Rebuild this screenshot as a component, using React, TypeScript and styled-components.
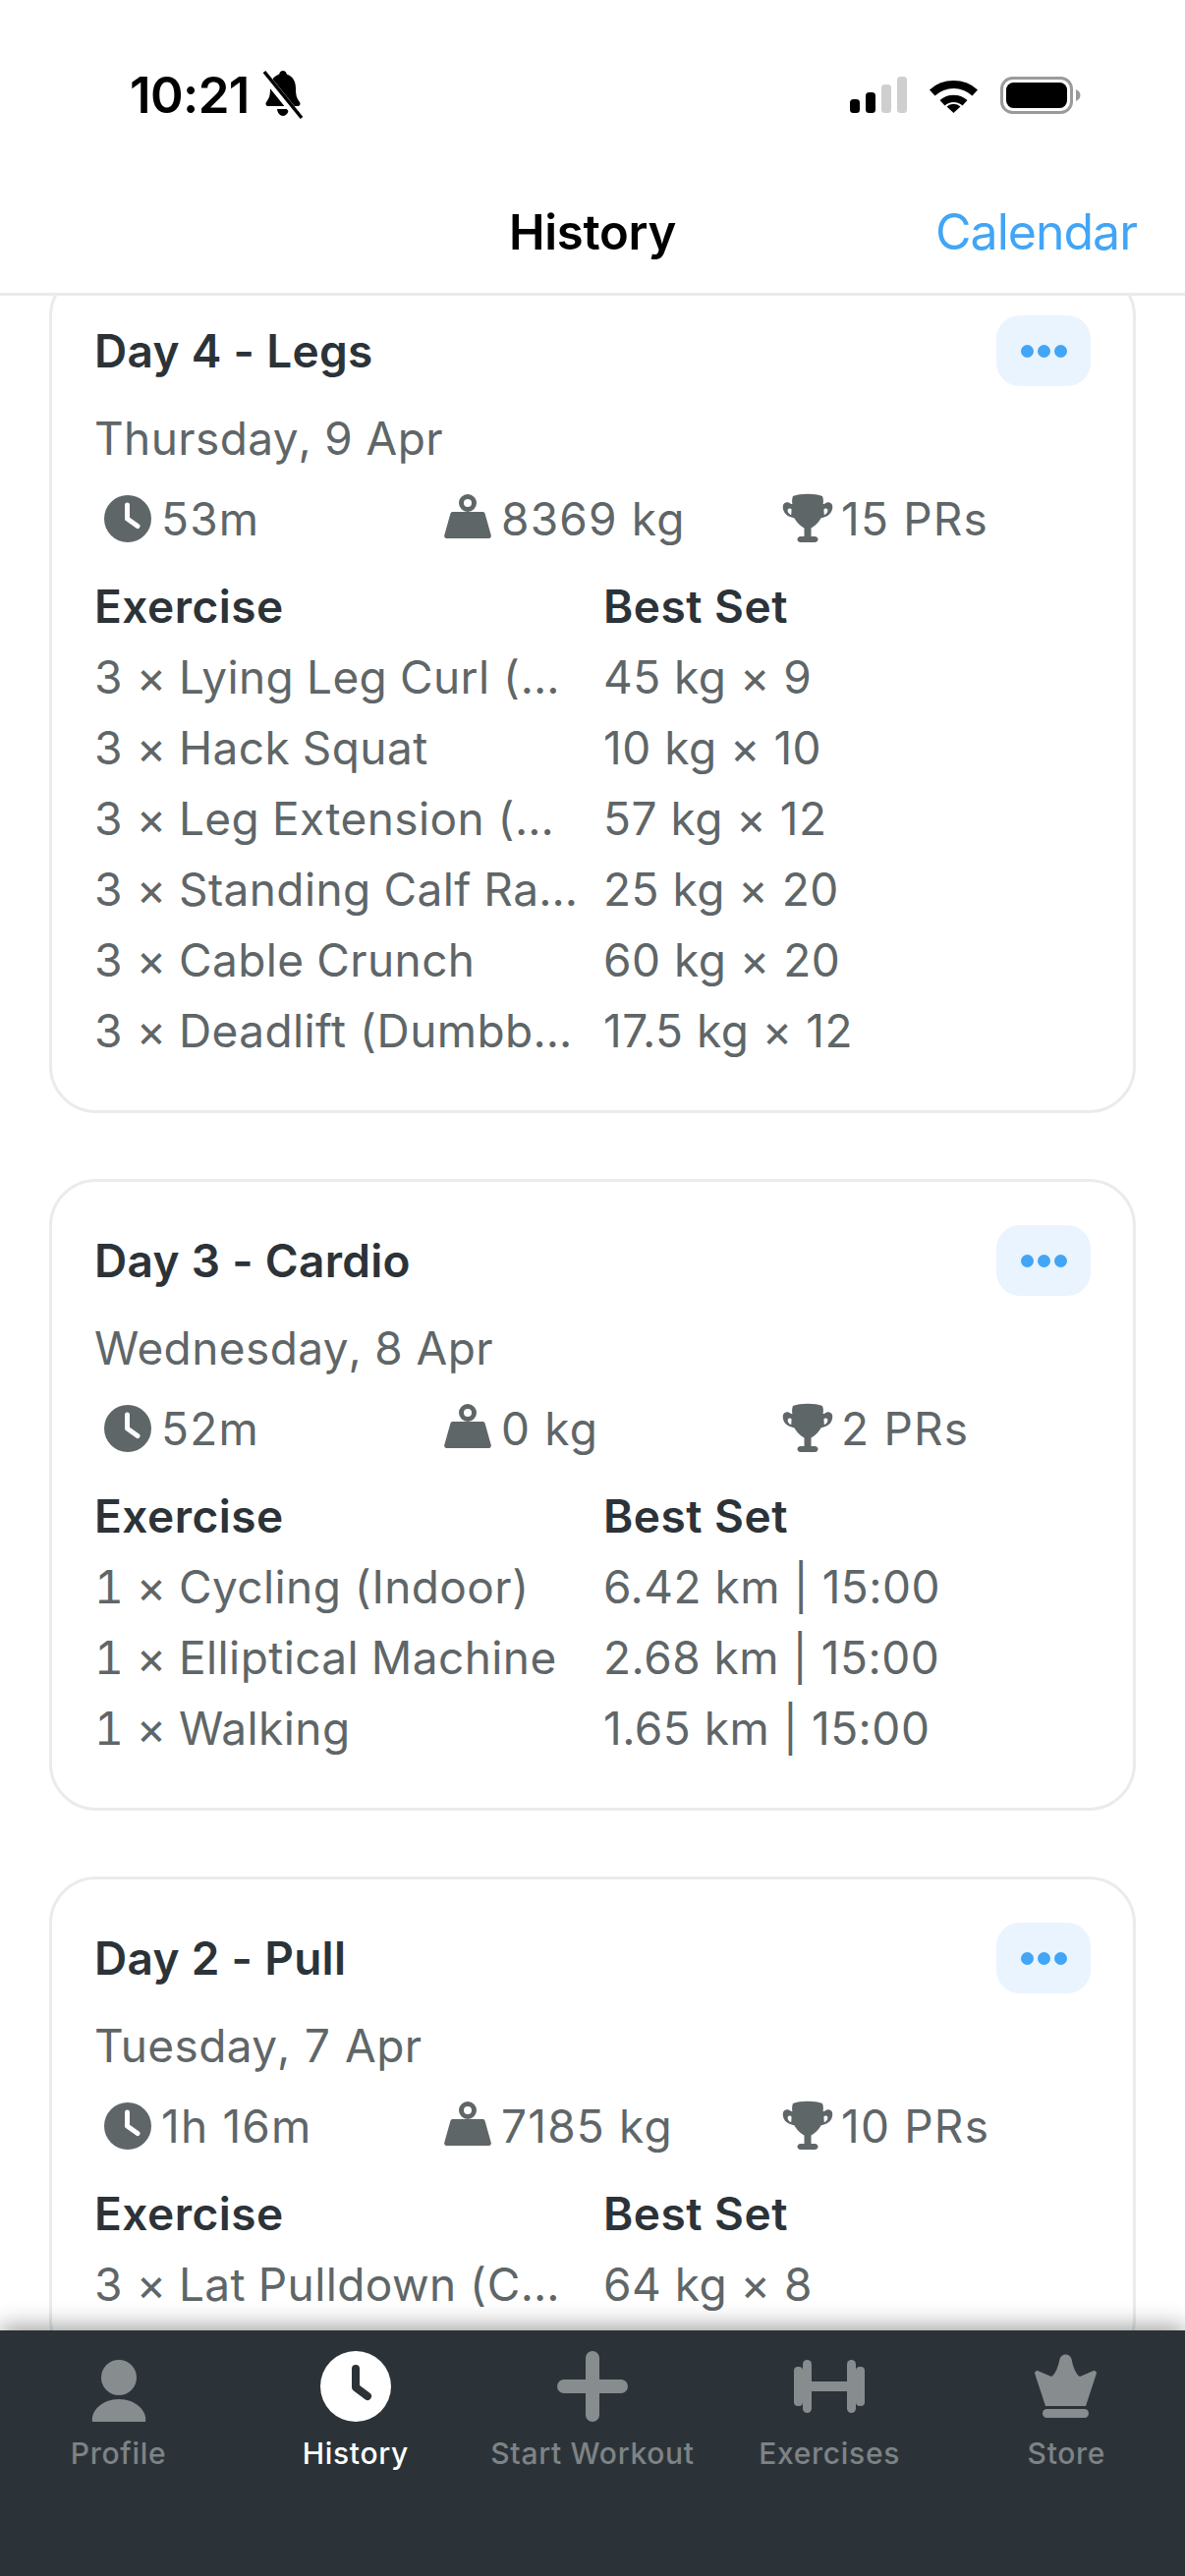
import React from "react";
import styled, { createGlobalStyle } from "styled-components";

const Global = createGlobalStyle`
  html, body { margin: 0; padding: 0; background: #fff; }
  body {
    font-family: Inter, "Noto Sans", "Liberation Sans", sans-serif;
    -webkit-font-smoothing: antialiased;
  }
`;

const Screen = styled.div`
  width: 1206px;
  height: 2622px;
  display: flex;
  flex-direction: column;
  overflow: hidden;
  background: #fff;
`;

const StatusBar = styled.div`
  height: 170px;
  flex: none;
  display: flex;
  align-items: center;
  justify-content: space-between;
  padding: 23px 106px 0 132px;
  box-sizing: border-box;
`;
const StatusLeft = styled.div`
  display: flex;
  align-items: center;
  gap: 14px;
`;
const Clock = styled.span`
  font-size: 51px;
  font-weight: 600;
  line-height: 60px;
  letter-spacing: -0.6px;
  color: #000;
`;
const StatusRight = styled.div`
  display: flex;
  align-items: center;
  gap: 22px;
`;

const NavBar = styled.header`
  height: 131px;
  flex: none;
  box-sizing: border-box;
  border-bottom: 3px solid #e9eaeb;
  display: grid;
  grid-template-columns: 1fr auto 1fr;
  align-items: center;
  padding: 4px 49px 0;
  position: relative;
  z-index: 2;
  background: #fff;
`;
const NavTitle = styled.h1`
  grid-column: 2;
  margin: 0;
  font-size: 49px;
  font-weight: 600;
  letter-spacing: -0.3px;
  color: #000;
`;
const NavAction = styled.span`
  grid-column: 3;
  justify-self: end;
  font-size: 50px;
  font-weight: 400;
  letter-spacing: -1px;
  color: #42a5f5;
`;

const Viewport = styled.main`
  flex: 1;
  min-height: 0;
  overflow: hidden;
`;
const List = styled.div`
  margin: -27px 50px 0;
  display: flex;
  flex-direction: column;
  gap: 67px;
`;

const Card = styled.article`
  border: 3px solid #e9ebec;
  border-radius: 48px;
  padding: 44px 43px 45px;
  background: #fff;
`;
const CardHead = styled.div`
  display: flex;
  align-items: center;
  justify-content: space-between;
`;
const CardTitle = styled.h2`
  margin: 0;
  font-size: 46px;
  font-weight: 600;
  letter-spacing: 0.3px;
  line-height: 72px;
  color: #2c3338;
`;
const MoreButton = styled.button`
  width: 96px;
  height: 72px;
  border: 0;
  border-radius: 24px;
  background: #e9f4fe;
  display: flex;
  align-items: center;
  justify-content: center;
  gap: 4px;
  padding: 0;
`;
const Dot = styled.span`
  width: 13px;
  height: 13px;
  border-radius: 50%;
  background: #42a5f5;
`;
const CardDate = styled.div`
  margin-top: 17px;
  font-size: 46px;
  line-height: 72px;
  letter-spacing: 0.4px;
  font-variant-numeric: tabular-nums;
  color: #5f6668;
`;
const Stats = styled.div`
  margin-top: 10px;
  margin-left: 4px;
  display: grid;
  grid-template-columns: repeat(3, 346px);
  height: 72px;
`;
const Stat = styled.div`
  display: flex;
  align-items: center;
  gap: 4px;
  font-size: 46px;
  line-height: 72px;
  letter-spacing: 1.2px;
  color: #5f6668;
`;
const StatIcon = styled.svg`
  width: 60px;
  height: 60px;
  flex: none;
  fill: #5f6668;
`;
const Table = styled.div`
  margin-top: 17px;
  display: grid;
  grid-template-columns: 518px 1fr;
  grid-auto-rows: 72px;
  align-items: center;
  font-size: 46px;
  white-space: nowrap;
`;
const HeadCell = styled.div`
  font-weight: 600;
  letter-spacing: 0.5px;
  color: #2c3338;
`;
const NameCell = styled.div`
  letter-spacing: 0.4px;
  font-variant-numeric: tabular-nums;
  color: #5f6668;
`;
const BestCell = styled.div`
  letter-spacing: 0.5px;
  color: #5f6668;
`;

const TabBar = styled.nav`
  height: 250px;
  flex: none;
  box-sizing: border-box;
  background: #2c3338;
  box-shadow: 0 -4px 22px rgba(0, 0, 0, 0.38);
  display: grid;
  grid-template-columns: repeat(5, 1fr);
  padding-top: 21px;
  position: relative;
  z-index: 3;
`;
const Tab = styled.div<{ $active?: boolean }>`
  display: flex;
  flex-direction: column;
  align-items: center;
  color: ${(p) => (p.$active ? "#ffffff" : "#7d8386")};
  font-size: 30px;
  line-height: 40px;
  letter-spacing: 0.7px;
  font-weight: 500;
`;
const TabIcon = styled.svg<{ $active?: boolean }>`
  width: 72px;
  height: 72px;
  margin-bottom: 12px;
  fill: ${(p) => (p.$active ? "#ffffff" : "#878c8e")};
`;

const ClockGlyph = () => (
  <StatIcon viewBox="0 0 60 60">
    <circle cx="30" cy="30" r="24" />
    <path d="M29.500 16v14l10.500 7.500" fill="none" stroke="#fff" strokeWidth="5" strokeLinecap="round" strokeLinejoin="round" />
  </StatIcon>
);
const WeightGlyph = () => (
  <StatIcon viewBox="0 0 60 60">
    <circle cx="30" cy="14" r="6.500" fill="none" stroke="#5f6668" strokeWidth="5" />
    <path d="M14.500 23h31a2 2 0 0 1 2 1.500l6.300 22.500a2.400 2.400 0 0 1-2.300 3h-43a2.400 2.400 0 0 1-2.300-3l6.300-22.500a2 2 0 0 1 2-1.500z" />
  </StatIcon>
);
const TrophyGlyph = () => (
  <StatIcon viewBox="0 0 60 60">
    <path d="M15 7c8-3 22-3 30 0 1.200 3 1 6 .6 8h1.400c3-3 7-2 8 1 1 4-1 10-7 12l-4.600 1.600C41 34 37 38 33.500 39.500V48h3.500c2.500 0 3.500 1.500 3.500 3s-1 3-3.500 3H23c-2.500 0-3.500-1.500-3.500-3s1-3 3.500-3h3.500v-8.500C23 38 19 34 16.600 29.600L12 28c-6-2-8-8-7-12 1-3 5-4 8-1h1.400C14 13 13.800 10 15 7zM13.600 20.500c-1-1.500-3.600-1.200-3.900.5-.4 2 1 4 3.500 5.200zM46.400 20.500c1-1.500 3.600-1.200 3.900.5.4 2-1 4-3.500 5.200z" fillRule="evenodd" />
  </StatIcon>
);

type Workout = {
  title: string;
  date: string;
  time: string;
  volume: string;
  prs: string;
  rows: [string, string][];
};

const workouts: Workout[] = [
  {
    title: "Day 4 - Legs",
    date: "Thursday, 9 Apr",
    time: "53m",
    volume: "8369 kg",
    prs: "15 PRs",
    rows: [
      ["3 × Lying Leg Curl (…", "45 kg × 9"],
      ["3 × Hack Squat", "10 kg × 10"],
      ["3 × Leg Extension (…", "57 kg × 12"],
      ["3 × Standing Calf Ra…", "25 kg × 20"],
      ["3 × Cable Crunch", "60 kg × 20"],
      ["3 × Deadlift (Dumbb…", "17.5 kg × 12"],
    ],
  },
  {
    title: "Day 3 - Cardio",
    date: "Wednesday, 8 Apr",
    time: "52m",
    volume: "0 kg",
    prs: "2 PRs",
    rows: [
      ["1 × Cycling (Indoor)", "6.42 km | 15:00"],
      ["1 × Elliptical Machine", "2.68 km | 15:00"],
      ["1 × Walking", "1.65 km | 15:00"],
    ],
  },
  {
    title: "Day 2 - Pull",
    date: "Tuesday, 7 Apr",
    time: "1h 16m",
    volume: "7185 kg",
    prs: "10 PRs",
    rows: [["3 × Lat Pulldown (C…", "64 kg × 8"]],
  },
];

export default function App() {
  return (
    <Screen>
      <Global />
      <StatusBar>
        <StatusLeft>
          <Clock>10:21</Clock>
          <svg width="40" height="52" viewBox="0 0 40 52">
            <path d="M20 1c2 0 3.500 1.500 3.800 3.500C30 6.500 33 12 33 19c0 7 1 10 4 14 1 1.500.5 4-2 4H5c-2.500 0-3-2.500-2-4 3-4 4-7 4-14C7 12 10 6.500 16.200 4.500 16.500 2.500 18 1 20 1zM14 40h12c-.5 4-3 7-6 7s-5.500-3-6-7z" />
            <path d="M-1 3 37 50" stroke="#fff" strokeWidth="8" />
            <path d="M1 2 39 49" stroke="#000" strokeWidth="3.400" />
          </svg>
        </StatusLeft>
        <StatusRight>
          <svg width="58" height="37" viewBox="0 0 58 37">
            <rect x="0" y="23" width="10" height="14" rx="3.500" fill="#000" />
            <rect x="16" y="16" width="10" height="21" rx="3.500" fill="#000" />
            <rect x="32" y="8" width="10" height="29" rx="3.500" fill="#cfcfcf" />
            <rect x="48" y="0" width="10" height="37" rx="3.500" fill="#cfcfcf" />
          </svg>
          <svg width="51" height="37" viewBox="0 0 51 37">
            <path d="M1 13.500A36 36 0 0 1 50 13.500L44.500 19.500A28 28 0 0 0 6.500 19.500Z" />
            <path d="M11.500 24A21 21 0 0 1 39.500 24L34.500 29.500A13 13 0 0 0 16.500 29.500Z" />
            <path d="M18.500 30.500A10 10 0 0 1 32.500 30.500L25.500 37Z" />
          </svg>
          <svg width="82" height="38" viewBox="0 0 82 38">
            <rect x="1.500" y="1.500" width="71" height="35" rx="11" fill="none" stroke="#9a9a9a" strokeWidth="3" />
            <rect x="6" y="6" width="62" height="26" rx="7.500" fill="#000" />
            <path d="M77 13c2.500 1 4.500 3 4.500 6s-2 5-4.500 6z" fill="#9a9a9a" />
          </svg>
        </StatusRight>
      </StatusBar>

      <NavBar>
        <NavTitle>History</NavTitle>
        <NavAction>Calendar</NavAction>
      </NavBar>

      <Viewport>
        <List>
          {workouts.map((w) => (
            <Card key={w.title}>
              <CardHead>
                <CardTitle>{w.title}</CardTitle>
                <MoreButton aria-label="More">
                  <Dot />
                  <Dot />
                  <Dot />
                </MoreButton>
              </CardHead>
              <CardDate>{w.date}</CardDate>
              <Stats>
                <Stat>
                  <ClockGlyph />
                  {w.time}
                </Stat>
                <Stat>
                  <WeightGlyph />
                  {w.volume}
                </Stat>
                <Stat>
                  <TrophyGlyph />
                  {w.prs}
                </Stat>
              </Stats>
              <Table>
                <HeadCell>Exercise</HeadCell>
                <HeadCell>Best Set</HeadCell>
                {w.rows.map(([name, best]) => (
                  <React.Fragment key={name}>
                    <NameCell>{name}</NameCell>
                    <BestCell>{best}</BestCell>
                  </React.Fragment>
                ))}
              </Table>
            </Card>
          ))}
        </List>
      </Viewport>

      <TabBar>
        <Tab>
          <TabIcon viewBox="0 0 72 72">
            <circle cx="36" cy="27" r="18" />
            <path d="M9 72c-2-11 10-23 27-23s29 12 27 23z" />
          </TabIcon>
          Profile
        </Tab>
        <Tab $active>
          <TabIcon $active viewBox="0 0 72 72">
            <circle cx="36" cy="36" r="36" />
            <path d="M36 18v19l12 9" fill="none" stroke="#2c3338" strokeWidth="8" strokeLinecap="round" strokeLinejoin="round" />
          </TabIcon>
          History
        </Tab>
        <Tab>
          <TabIcon viewBox="0 0 72 72">
            <rect x="29" y="0" width="14" height="72" rx="7" />
            <rect x="0" y="29" width="72" height="14" rx="7" />
          </TabIcon>
          Start Workout
        </Tab>
        <Tab>
          <TabIcon viewBox="0 0 72 72">
            <rect x="0" y="16" width="9" height="40" rx="4" />
            <rect x="9" y="9" width="9" height="54" rx="4.500" />
            <rect x="17" y="31" width="38" height="10" />
            <rect x="54" y="9" width="9" height="54" rx="4.500" />
            <rect x="63" y="16" width="9" height="40" rx="4" />
          </TabIcon>
          Exercises
        </Tab>
        <Tab>
          <TabIcon viewBox="-4 -4 72 72">
            <path d="M0 18.500c.4-2 2-3 3.500-2.200L17 22c4-2 7-10 8.500-18 2-6 10-6 12 0C39 12 42 20 46 22l13.500-5.700c1.500-.8 3.100.2 3.500 2.200L52 52H11z" />
            <rect x="8" y="55" width="47" height="9" rx="4.500" />
          </TabIcon>
          Store
        </Tab>
      </TabBar>
    </Screen>
  );
}
